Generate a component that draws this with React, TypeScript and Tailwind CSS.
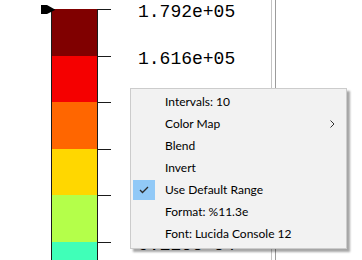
import React from "react";

const segments = [
  { color: "#800000", h: "h-[47px]", label: "1.792e+05" },
  { color: "#f50000", h: "h-[46px]", label: "1.616e+05" },
  { color: "#ff6600", h: "h-[47px]", label: "" },
  { color: "#ffd700", h: "h-[46px]", label: "" },
  { color: "#b4ff4a", h: "h-[47px]", label: "" },
  { color: "#40ffb8", h: "h-[40px]", label: "9.120e+04" },
];

const items = [
  { label: "Intervals: 10" },
  { label: "Color Map", sub: true },
  { label: "Blend" },
  { label: "Invert" },
  { label: "Use Default Range", checked: true },
  { label: "Format: %11.3e" },
  { label: "Font: Lucida Console 12" },
];

export default function App() {
  return (
    <div className="relative w-[362px] h-[260px] overflow-hidden bg-white">
      <div className="flex h-full">
        <div className="relative w-[271px] pt-[9px]">
          {segments.map((s, i) => (
            <div key={i} className={`flex items-start ${s.h}`}>
              <div
                className="ml-[51px] w-[47px] h-full border-x border-[#1a1a1a]"
                style={{ backgroundColor: s.color }}
              />
              <div className="w-[13px] h-px bg-[#1a1a1a]" />
              {s.label && (
                <div
                  className="ml-[27px] -mt-[6px] text-[18px] leading-[18px] text-black whitespace-nowrap"
                  style={{ fontFamily: '"Liberation Mono", monospace' }}
                >
                  {s.label}
                </div>
              )}
            </div>
          ))}
          <svg className="absolute left-[41px] top-[5px]" width="15" height="10" viewBox="0 0 15 10">
            <polygon points="0,0 6,0 14,4.5 14,5 6,9 0,9" fill="#000" />
          </svg>
        </div>
        <div className="flex h-full">
          <div className="w-px bg-[#c4c4c4]" />
          <div className="w-[3px] bg-white" />
          <div className="w-px bg-[#9c9c9c]" />
        </div>
        <div className="flex-1 bg-white" />
      </div>

      <div
        className="absolute z-10 left-[130px] top-[88px] w-[217px] h-[161px] box-border flex flex-col border border-[#cccccc] bg-[#f2f2f2] pt-[2px] shadow-[3px_3px_2px_rgba(0,0,0,0.35)]"
        style={{ fontFamily: '"Segoe UI", Lato, sans-serif' }}
      >
        {items.map((it, i) => (
          <div key={i} className="flex items-center h-[22px] shrink-0 pl-[2px] text-[12px] text-black">
            <div className={`w-[22px] h-[20px] flex items-center justify-center ${it.checked ? "bg-[#91c9f7]" : ""}`}>
              {it.checked && (
                <svg width="10" height="8" viewBox="0 0 10 8">
                  <polyline points="1,4 3.5,6.5 9,1" fill="none" stroke="#2b2b2b" strokeWidth="1.3" />
                </svg>
              )}
            </div>
            <span className="ml-[10px] flex-1 whitespace-nowrap">{it.label}</span>
            {it.sub && (
              <svg className="mr-[11px]" width="5" height="8" viewBox="0 0 5 8">
                <polyline points="0.5,0.5 4,4 0.5,7.5" fill="none" stroke="#333" strokeWidth="1" />
              </svg>
            )}
          </div>
        ))}
      </div>
    </div>
  );
}
